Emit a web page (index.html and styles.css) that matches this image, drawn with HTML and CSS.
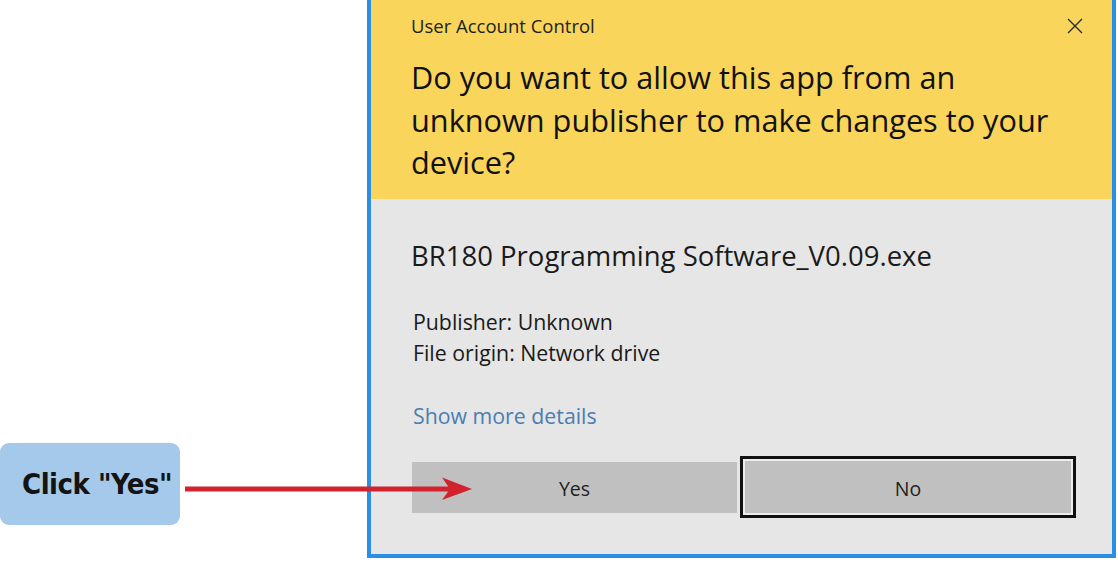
FILE: index.html
```html
<!DOCTYPE html>
<html>
<head>
<meta charset="utf-8">
<link rel="stylesheet" href="styles.css">
</head>
<body>
<div class="page">
  <div class="left">
    <div class="callout">Click "Yes"</div>
  </div>
  <div class="dialog">
    <div class="header">
      <div class="title-row">
        <span class="title">User Account Control</span>
        <svg class="close" width="16" height="16" viewBox="0 0 16 16"><path d="M1 1 L15 15 M15 1 L1 15" stroke="#2b2b2b" stroke-width="1.4" fill="none"/></svg>
      </div>
      <h1 class="question">Do you want to allow this app from an<br>unknown publisher to make changes to your<br>device?</h1>
    </div>
    <div class="body">
      <div class="app-name">BR180 Programming Software_V0.09.exe</div>
      <div class="meta">
        <div>Publisher: Unknown</div>
        <div>File origin: Network drive</div>
      </div>
      <div class="more">Show more details</div>
      <div class="buttons">
        <div class="btn yes">Yes</div>
        <div class="btn no">No</div>
      </div>
    </div>
  </div>
  <svg class="arrow" width="292" height="26" viewBox="0 0 292 26">
    <rect x="0" y="10.5" width="268" height="5" fill="#d2222d"/>
    <polygon points="287,13 257,1.5 265,13 257,24" fill="#d2222d"/>
  </svg>
</div>
</body>
</html>
```
FILE: styles.css
```css
html, body {
  margin: 0;
  padding: 0;
  background: #ffffff;
}
.page {
  position: relative;
  width: 1118px;
  height: 562px;
  display: flex;
  font-family: "Open Sans", "Noto Sans", sans-serif;
}
.left {
  width: 367px;
  display: flex;
  flex-direction: column;
  justify-content: flex-end;
  padding-bottom: 37px;
  box-sizing: border-box;
}
.callout {
  width: 180px;
  height: 82px;
  background: #a5c9ea;
  border-radius: 9px;
  box-sizing: border-box;
  padding-left: 22px;
  display: flex;
  align-items: center;
  font-family: "DejaVu Sans Condensed", "DejaVu Sans", sans-serif;
  font-stretch: condensed;
  font-weight: bold;
  font-size: 29px;
  color: #141414;
  letter-spacing: -0.5px;
}
.dialog {
  width: 749px;
  height: 558px;
  box-sizing: border-box;
  border: 4px solid #2a8fe2;
  border-top: none;
  background: #e6e6e6;
  display: flex;
  flex-direction: column;
}
.header {
  background: #f9d55c;
  height: 199px;
  box-sizing: border-box;
  padding: 0 29px 0 40px;
}
.title-row {
  height: 50px;
  display: flex;
  align-items: center;
  justify-content: space-between;
}
.title {
  font-size: 18.5px;
  color: #222;
}
.close {
  margin-top: 2px;
}
.question {
  margin: 6px 0 0 0;
  font-weight: normal;
  font-size: 30.7px;
  line-height: 42.5px;
  color: #111;
  white-space: nowrap;
}
.body {
  padding: 41px 35px 0 40px;
  color: #1a1a1a;
}
.app-name {
  font-size: 27.5px;
  line-height: 32px;
}
.meta {
  margin-top: 34px;
  margin-left: 2px;
  font-size: 21.3px;
  line-height: 31px;
}
.more {
  margin-top: 32px;
  margin-left: 2px;
  font-size: 21.3px;
  line-height: 31px;
  color: #4a7db2;
}
.buttons {
  margin-top: 25px;
  margin-left: 1px;
  display: flex;
  align-items: center;
  gap: 3px;
}
.btn {
  display: flex;
  align-items: center;
  justify-content: center;
  background: #c0c0c0;
  font-size: 19.5px;
  color: #222;
  box-sizing: border-box;
  padding-top: 3px;
}
.yes {
  width: 325px;
  height: 51px;
}
.no {
  width: 336px;
  height: 62px;
  border: 3px solid #111;
  box-shadow: inset 0 0 0 2px #ececec;
}
.arrow {
  position: absolute;
  left: 185px;
  top: 476px;
}
```
